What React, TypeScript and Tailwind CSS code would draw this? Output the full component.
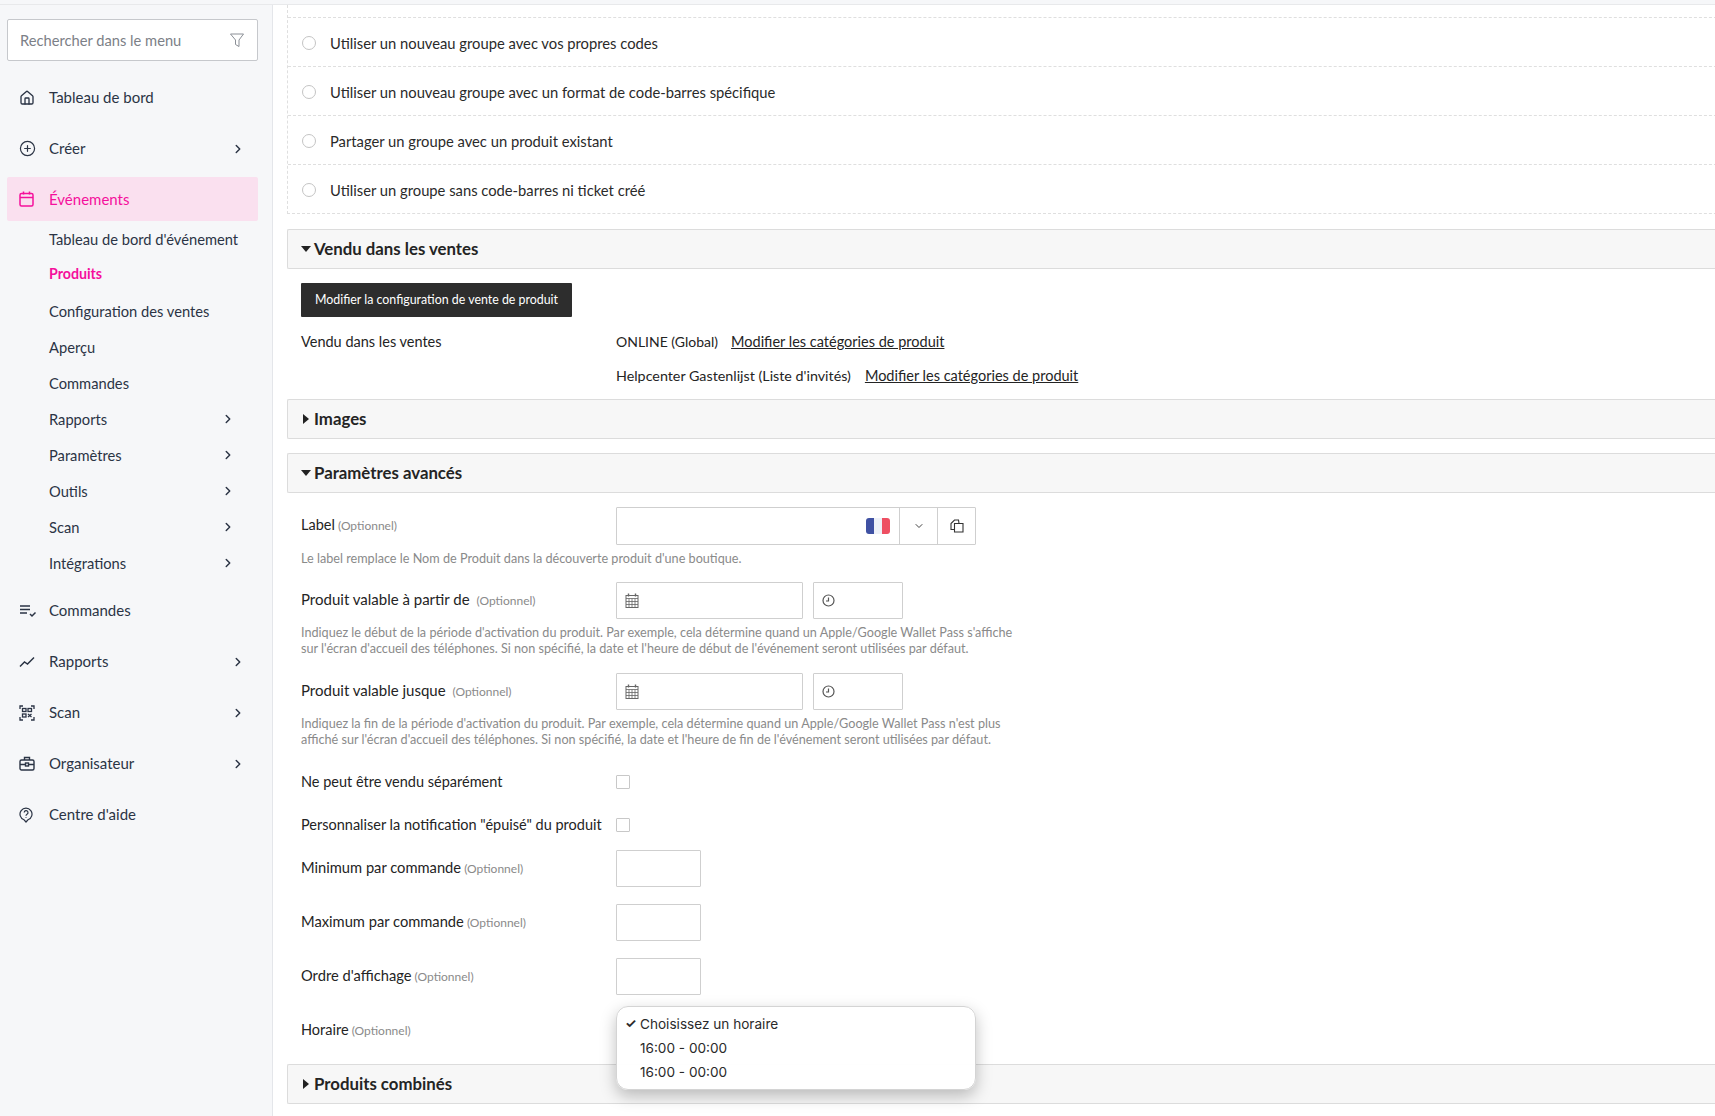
import { Home, CirclePlus, ChevronRight, ChevronDown } from "lucide-react";

const font = "font-['Lato','Liberation_Sans',sans-serif]";

function Funnel() {
  return (
    <svg width="16" height="16" viewBox="0 0 16 16" fill="none" stroke="#8b8f96" strokeWidth="1">
      <path d="M1.500 2h13L10 8v6.500L6.500 12.500V8z" />
    </svg>
  );
}
function EventIcon() {
  return (
    <svg width="15" height="16" viewBox="0 0 15 16" fill="none" stroke="#f5109c" strokeWidth="1.500">
      <rect x="1" y="2.500" width="13" height="12.500" rx="1.500" />
      <path d="M1 6.500h13M4.500 .5v3M10.500 .5v3" />
    </svg>
  );
}
function OrdersIcon() {
  return (
    <svg width="18" height="14" viewBox="0 0 18 14" fill="none" stroke="#2b3445" strokeWidth="1.500">
      <path d="M1 2h10M1 5.500h10M1 9h7M11 10l2 2 3.500-3.500" />
    </svg>
  );
}
function TrendIcon() {
  return (
    <svg width="16" height="12" viewBox="0 0 16 12" fill="none" stroke="#2b3445" strokeWidth="1.500">
      <path d="M1 10.500l4.500-4.500L8.500 8 15 1.500" />
    </svg>
  );
}
function ScanIcon() {
  return (
    <svg width="16" height="16" viewBox="0 0 16 16" fill="none" stroke="#2b3445" strokeWidth="1.300">
      <path d="M1 4V1h3M12 1h3v3M1 12v3h3M15 12v3h-3" />
      <rect x="3.500" y="3.500" width="3.500" height="3" />
      <rect x="9" y="3.500" width="3.500" height="3" />
      <rect x="3.500" y="9" width="3.500" height="3" />
      <path d="M9 9l3.500 3M12.500 9L9 12" />
    </svg>
  );
}
function CaseIcon() {
  return (
    <svg width="16" height="15" viewBox="0 0 16 15" fill="none" stroke="#2b3445" strokeWidth="1.400">
      <rect x="1" y="4" width="14" height="10" rx="1.500" />
      <path d="M5.500 4V1.500h5V4M1 8.500h14" />
      <rect x="6.500" y="7" width="3" height="3" fill="#f6f7f9" />
    </svg>
  );
}
function HelpIcon() {
  return (
    <svg width="14" height="16" viewBox="0 0 14 16" fill="none" stroke="#2b3445" strokeWidth="1.200">
      <path d="M7 15l-2-2.200A6 6 0 1 1 9 12.800z" />
      <path d="M5.200 5.500a1.900 1.900 0 1 1 2.800 1.700c-.7.4-1 .8-1 1.500M7 10.200v.8" />
    </svg>
  );
}
function PasteIcon() {
  return (
    <svg width="14" height="14" viewBox="0 0 14 14" fill="none" stroke="#333" strokeWidth="1.100">
      <path d="M4.500 10.500H1V4.500L4.500 1H8.500L9 4.500" />
      <path d="M4.500 4.500H13V13H4.500z" />
    </svg>
  );
}
function CalGrid() {
  return (
    <svg width="14" height="15" viewBox="0 0 14 15" fill="none" stroke="#666" strokeWidth="1">
      <rect x="1" y="2.500" width="12" height="12" />
      <path d="M1 5.500h12M1 8.500h12M1 11.500h12M4 5.500v9M7 5.500v9M10 5.500v9" strokeWidth=".8" />
      <path d="M3.500 .5v3M10.500 .5v3" strokeWidth="1.400" />
    </svg>
  );
}
function ClockIcon() {
  return (
    <svg width="13" height="13" viewBox="0 0 13 13" fill="none" stroke="#555" strokeWidth="1.200">
      <circle cx="6.500" cy="6.500" r="5.500" />
      <path d="M6.500 3.500v3.500H4" />
    </svg>
  );
}

function NavItem({ icon, label, chevron }: { icon: React.ReactNode; label: string; chevron?: boolean }) {
  return (
    <div className="flex items-center h-[51px] pl-[19px] pr-[27px] text-[15px] text-[#2b3445]">
      <span className="w-[30px] flex items-center">{icon}</span>
      <span className="flex-1">{label}</span>
      {chevron && <ChevronRight size={14} strokeWidth={2.500} />}
    </div>
  );
}
function SubItem({ label, chevron, active }: { label: string; chevron?: boolean; active?: boolean }) {
  return (
    <div className={`flex items-center h-[36px] pl-[49px] pr-[37px] ${active ? "text-[14.200px] text-[#f5109c] font-bold pb-[2px]" : "text-[14.700px] text-[#2b3445]"}`}>
      <span className="flex-1 whitespace-nowrap">{label}</span>
      {chevron && <ChevronRight size={14} strokeWidth={2.500} />}
    </div>
  );
}

function Radio({ label, last }: { label: string; last?: boolean }) {
  return (
    <div className={`flex items-center pt-[2px] pl-[14px] text-[14.750px] text-[#2a2a2a] ${last ? "h-[48px]" : "h-[49px] border-b border-dashed border-[#dfdfdf]"}`}>
      <span className="w-[14px] h-[14px] rounded-full border border-[#c4c4c4] bg-white mr-[14px]" />
      {label}
    </div>
  );
}
function Section({ title, open, className = "" }: { title: string; open?: boolean; className?: string }) {
  return (
    <div className={`flex items-center h-[40px] pl-[13px] bg-[#f7f7f7] border border-r-0 border-[#dcdcdc] rounded-l-[2px] text-[16.800px] font-bold text-[#242424] ${className}`}>
      {open ? (
        <svg width="10" height="6" viewBox="0 0 10 6" className="mr-[3px]"><path d="M0 0h10L5 6z" fill="#222" /></svg>
      ) : (
        <svg width="6" height="10" viewBox="0 0 6 10" className="mr-[5px] ml-[2px]"><path d="M0 0l6 5-6 5z" fill="#222" /></svg>
      )}
      {title}
    </div>
  );
}
function Opt() {
  return <span className="text-[12px] text-[#8a8a8a]"> (Optionnel)</span>;
}
function Help({ children, className = "" }: { children: React.ReactNode; className?: string }) {
  return <div className={`ml-[14px] text-[12.650px] leading-[16px] text-[#8a8a8a] whitespace-nowrap ${className}`}>{children}</div>;
}
function DateRow({ label, className = "" }: { label: string; className?: string }) {
  return (
    <div className={`flex items-center h-[37px] pl-[14px] ${className}`}>
      <div className="w-[315px] pb-[2px] text-[15px] text-[#242424] whitespace-nowrap">
        {label} <span className="ml-[3px] text-[12px] text-[#8a8a8a]">(Optionnel)</span>
      </div>
      <div className="w-[187px] h-[37px] border border-[#cfcfcf] flex items-center pl-[8px] rounded-[1px]">
        <CalGrid />
      </div>
      <div className="w-[90px] h-[37px] ml-[10px] border border-[#cfcfcf] flex items-center pl-[8px] rounded-[1px]">
        <ClockIcon />
      </div>
    </div>
  );
}
function NumRow({ label, className = "" }: { label: string; className?: string }) {
  return (
    <div className={`flex items-center h-[37px] pl-[14px] ${className}`}>
      <div className="w-[315px] pb-[3px] text-[14.700px] text-[#242424] whitespace-nowrap">
        {label}
        <Opt />
      </div>
      <div className="w-[85px] h-[37px] border border-[#cfcfcf] rounded-[1px]" />
    </div>
  );
}
function CheckRow({ label, className = "" }: { label: string; className?: string }) {
  return (
    <div className={`flex items-center h-[20px] pl-[14px] ${className}`}>
      <div className="w-[315px] text-[14.500px] text-[#242424] whitespace-nowrap">{label}</div>
      <div className="w-[14px] h-[14px] border border-[#c8c8c8] rounded-[1px]" />
    </div>
  );
}

export default function App() {
  return (
    <div className={`${font} w-[1715px] h-[1116px] overflow-hidden bg-white flex flex-col`}>
      <div className="h-[5px] shrink-0 bg-[#f6f7f9] border-b border-[#e8e9eb]" />
      <div className="flex flex-1 min-h-0">
        <aside className="w-[273px] shrink-0 bg-[#f6f7f9] border-r border-[#e4e6ea] pt-[14px]">
          <div className="mx-[7px] w-[251px] h-[42px] bg-white border border-[#c6c8cc] rounded-[2px] flex items-center justify-between pl-[12px] pr-[12px] text-[14.700px] text-[#7c8087]">
            Rechercher dans le menu
            <Funnel />
          </div>
          <div className="mt-[11px]">
            <NavItem icon={<Home size={16} strokeWidth={2} />} label="Tableau de bord" />
            <NavItem icon={<CirclePlus size={17} strokeWidth={1.700} />} label="Créer" chevron />
            <div className="mx-[7px] w-[251px] h-[44px] mt-[3px] bg-[#fae0ef] rounded-[2px] flex items-center pl-[12px] text-[15px] text-[#f5109c]">
              <span className="w-[30px] flex items-center"><EventIcon /></span>
              Événements
            </div>
            <SubItem label="Tableau de bord d'événement" />
            <SubItem label="Produits" active />
            <SubItem label="Configuration des ventes" />
            <SubItem label="Aperçu" />
            <SubItem label="Commandes" />
            <SubItem label="Rapports" chevron />
            <SubItem label="Paramètres" chevron />
            <SubItem label="Outils" chevron />
            <SubItem label="Scan" chevron />
            <SubItem label="Intégrations" chevron />
            <div className="mt-[4px]">
              <NavItem icon={<OrdersIcon />} label="Commandes" />
              <NavItem icon={<TrendIcon />} label="Rapports" chevron />
              <NavItem icon={<ScanIcon />} label="Scan" chevron />
              <NavItem icon={<CaseIcon />} label="Organisateur" chevron />
              <NavItem icon={<HelpIcon />} label="Centre d'aide" />
            </div>
          </div>
        </aside>
        <main className="flex-1 min-w-0 overflow-hidden pl-[14px]">
          <div className="w-[1500px] relative">
            <div className="border-l border-b border-dashed border-[#dfdfdf]">
              <div className="h-[13px] border-b border-dashed border-[#dfdfdf]" />
              <Radio label="Utiliser un nouveau groupe avec vos propres codes" />
              <Radio label="Utiliser un nouveau groupe avec un format de code-barres spécifique" />
              <Radio label="Partager un groupe avec un produit existant" />
              <Radio label="Utiliser un groupe sans code-barres ni ticket créé" last />
            </div>
            <Section title="Vendu dans les ventes" open className="mt-[15px]" />
            <div className="ml-[14px] mt-[14px] w-[271px] h-[34px] bg-[#2d2d2d] rounded-[1px] text-white text-[12.400px] flex items-center justify-center">
              Modifier la configuration de vente de produit
            </div>
            <div className="flex pl-[14px] mt-[14px] pt-[1px] h-[20px] items-center text-[14.500px] text-[#242424]">
              <div className="w-[315px]">Vendu dans les ventes</div>
              <div className="text-[14px]">ONLINE (Global)</div>
              <div className="ml-[13px] underline">Modifier les catégories de produit</div>
            </div>
            <div className="flex pl-[329px] mt-[14px] pt-[1px] h-[20px] items-center text-[14.500px] text-[#242424]">
              <div className="text-[14.300px]">Helpcenter Gastenlijst (Liste d'invités)</div>
              <div className="ml-[14px] underline">Modifier les catégories de produit</div>
            </div>
            <Section title="Images" className="mt-[14px]" />
            <Section title="Paramètres avancés" open className="mt-[14px]" />
            <div className="flex items-center h-[38px] mt-[14px] pl-[14px]">
              <div className="w-[315px] pb-[2px] text-[14.500px] text-[#242424]">Label<Opt /></div>
              <div className="w-[360px] h-[38px] border border-[#cfcfcf] rounded-[1px] flex">
                <div className="w-[282px] flex items-center justify-end pr-[9px]">
                  <span className="w-[24px] h-[16px] rounded-[3px] overflow-hidden flex">
                    <span className="flex-1 bg-[#3f51a3]" />
                    <span className="flex-1 bg-[#eef1f8]" />
                    <span className="flex-1 bg-[#ee4f62]" />
                  </span>
                </div>
                <div className="w-[38px] border-l border-[#cfcfcf] flex items-center justify-center"><ChevronDown size={12} color="#444" /></div>
                <div className="flex-1 border-l border-[#cfcfcf] flex items-center justify-center"><PasteIcon /></div>
              </div>
            </div>
            <Help className="mt-[6px]">Le label remplace le Nom de Produit dans la découverte produit d'une boutique.</Help>
            <DateRow label="Produit valable à partir de" className="mt-[15px]" />
            <Help className="mt-[6px]">Indiquez le début de la période d'activation du produit. Par exemple, cela détermine quand un Apple/Google Wallet Pass s'affiche<br />sur l'écran d'accueil des téléphones. Si non spécifié, la date et l'heure de début de l'événement seront utilisées par défaut.</Help>
            <DateRow label="Produit valable jusque" className="mt-[16px]" />
            <Help className="mt-[6px]">Indiquez la fin de la période d'activation du produit. Par exemple, cela détermine quand un Apple/Google Wallet Pass n'est plus<br />affiché sur l'écran d'accueil des téléphones. Si non spécifié, la date et l'heure de fin de l'événement seront utilisées par défaut.</Help>
            <CheckRow label="Ne peut être vendu séparément" className="mt-[24px]" />
            <CheckRow label={'Personnaliser la notification "épuisé" du produit'} className="mt-[23px]" />
            <NumRow label="Minimum par commande" className="mt-[15px]" />
            <NumRow label="Maximum par commande" className="mt-[17px]" />
            <NumRow label="Ordre d'affichage" className="mt-[17px]" />
            <div className="relative flex items-center h-[37px] pl-[14px] mt-[17px]">
              <div className="w-[315px] pb-[2px] text-[14.500px] text-[#242424]">Horaire<Opt /></div>
              <div className="absolute left-[329px] top-[-6px] w-[360px] h-[84px] bg-white/95 rounded-[12px] border border-[#d4d4d4] shadow-[0_6px_16px_rgba(0,0,0,0.25)] z-10 font-['Inter',sans-serif] text-[13.600px] text-[#2a2a2a] pt-[5px]">
                <div className="h-[24px] flex items-center"><span className="w-[23px] pl-[8px] text-[13px] font-bold">✓</span>Choisissez un horaire</div>
                <div className="h-[24px] flex items-center pl-[23px]">16:00 - 00:00</div>
                <div className="h-[24px] flex items-center pl-[23px]">16:00 - 00:00</div>
              </div>
            </div>
            <Section title="Produits combinés" className="mt-[15px]" />
          </div>
        </main>
      </div>
    </div>
  );
}
